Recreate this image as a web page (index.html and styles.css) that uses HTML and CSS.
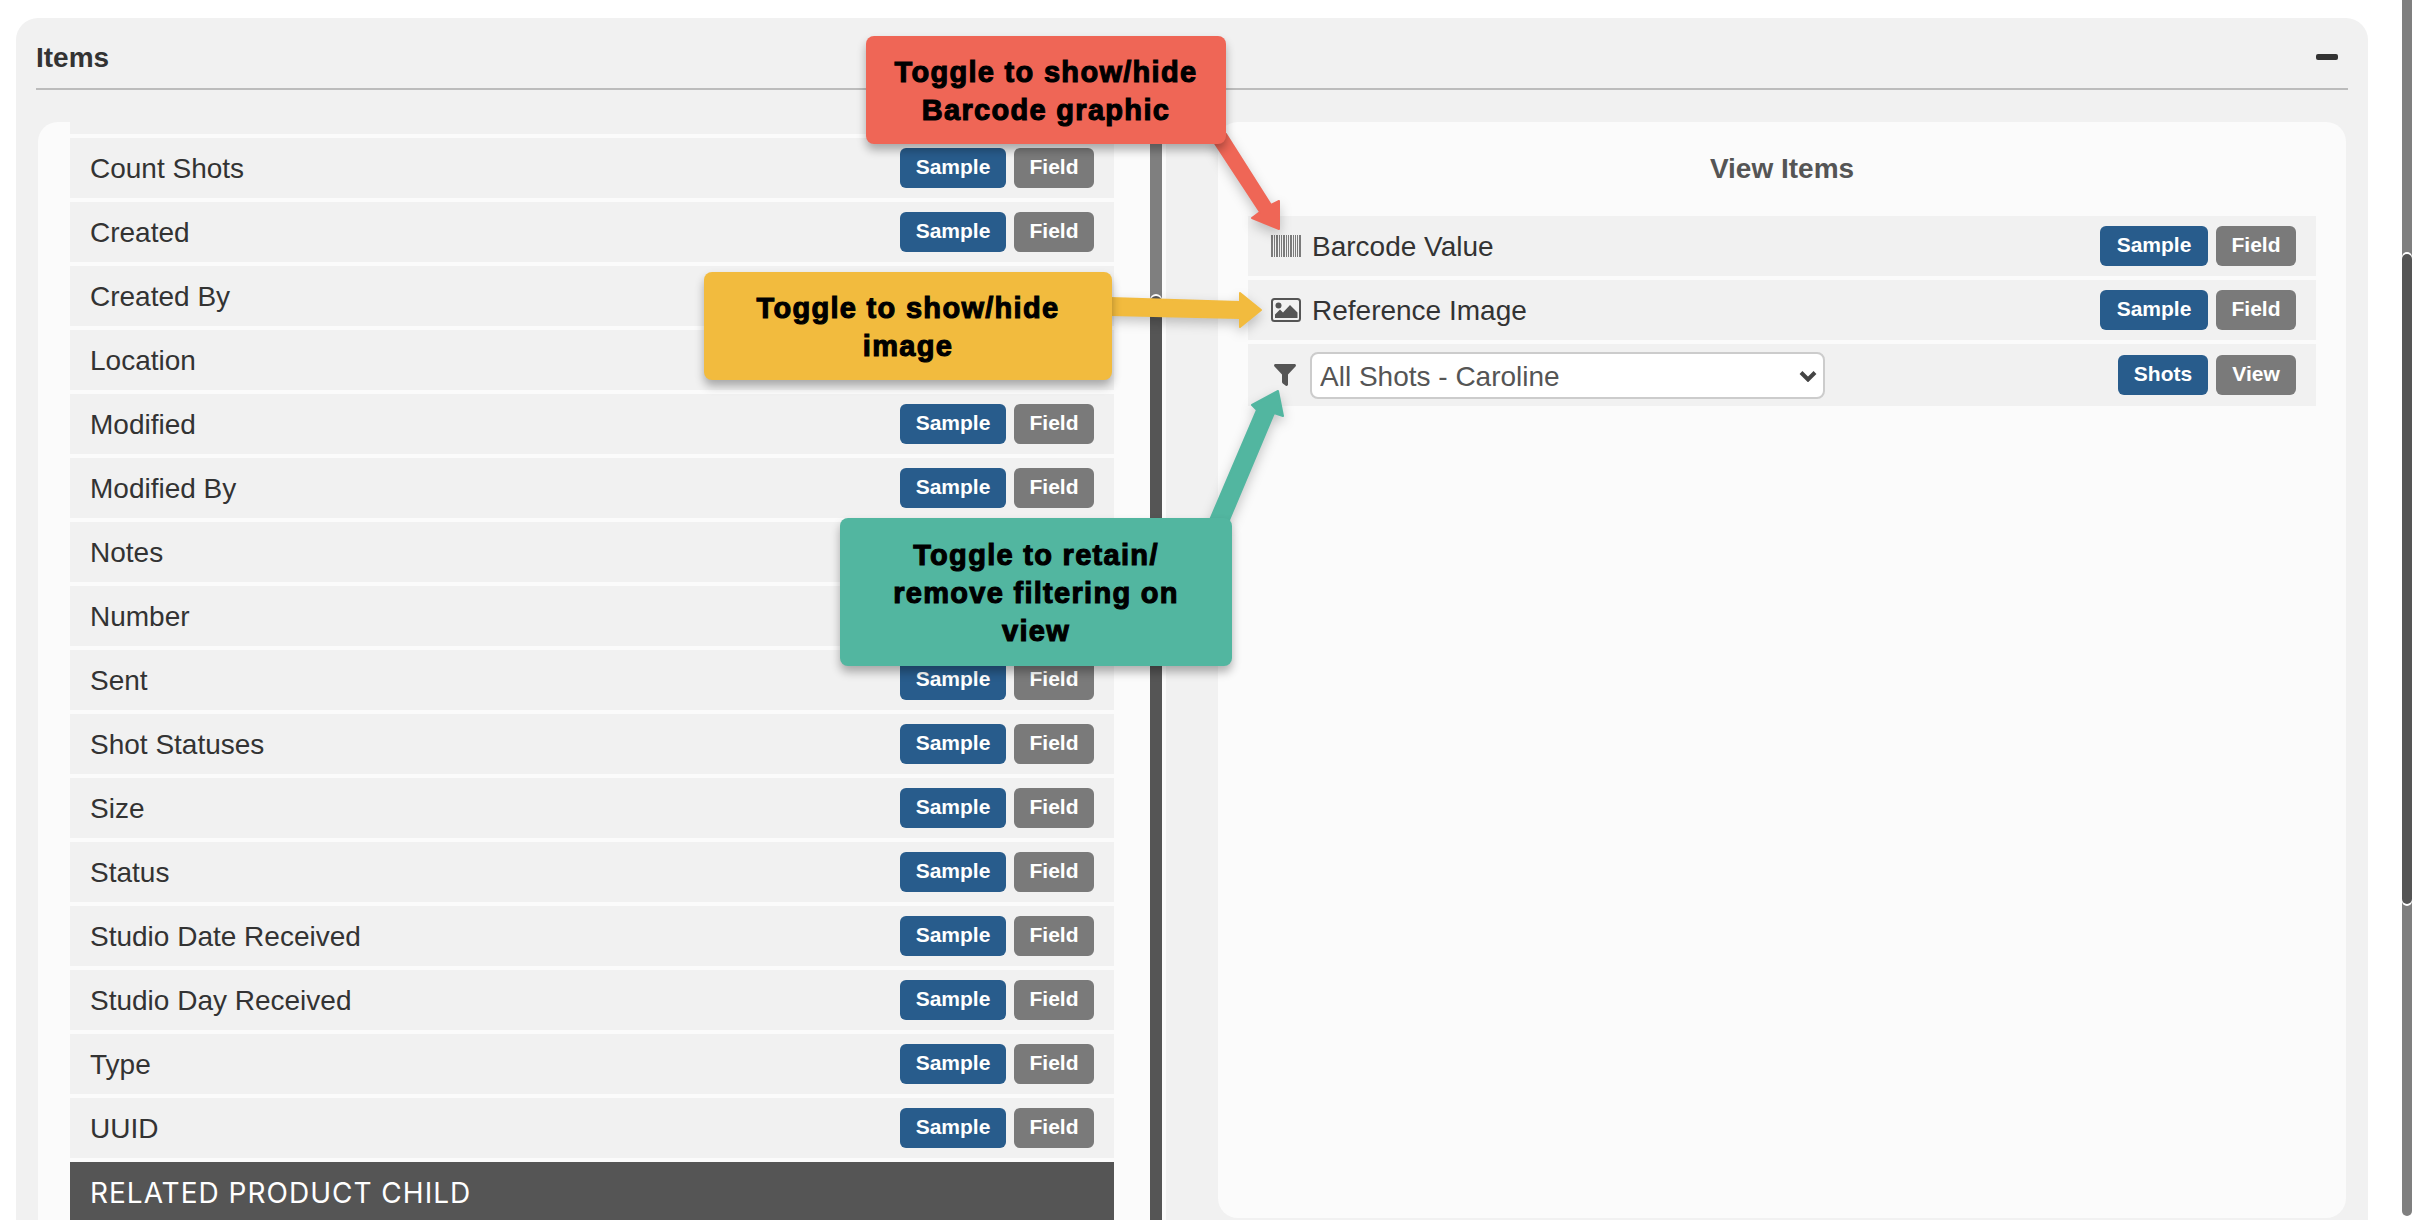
FILE: index.html
```html
<!DOCTYPE html>
<html lang="en">
<head>
<meta charset="utf-8">
<title>Items</title>
<link rel="stylesheet" href="styles.css">
</head>
<body>
<div class="page">
  <section class="panel">
    <header class="panel-head">
      <h2 class="panel-title">Items</h2>
      <span class="collapse"></span>
    </header>
    <div class="columns">
      <div class="col col-left">
        <div class="list">
          <div class="row-clipped"></div>
          <div class="row"><span class="label">Count Shots</span><span class="btn btn-blue">Sample</span><span class="btn btn-grey">Field</span></div>
          <div class="row"><span class="label">Created</span><span class="btn btn-blue">Sample</span><span class="btn btn-grey">Field</span></div>
          <div class="row"><span class="label">Created By</span><span class="btn btn-blue">Sample</span><span class="btn btn-grey">Field</span></div>
          <div class="row"><span class="label">Location</span><span class="btn btn-blue">Sample</span><span class="btn btn-grey">Field</span></div>
          <div class="row"><span class="label">Modified</span><span class="btn btn-blue">Sample</span><span class="btn btn-grey">Field</span></div>
          <div class="row"><span class="label">Modified By</span><span class="btn btn-blue">Sample</span><span class="btn btn-grey">Field</span></div>
          <div class="row"><span class="label">Notes</span><span class="btn btn-blue">Sample</span><span class="btn btn-grey">Field</span></div>
          <div class="row"><span class="label">Number</span><span class="btn btn-blue">Sample</span><span class="btn btn-grey">Field</span></div>
          <div class="row"><span class="label">Sent</span><span class="btn btn-blue">Sample</span><span class="btn btn-grey">Field</span></div>
          <div class="row"><span class="label">Shot Statuses</span><span class="btn btn-blue">Sample</span><span class="btn btn-grey">Field</span></div>
          <div class="row"><span class="label">Size</span><span class="btn btn-blue">Sample</span><span class="btn btn-grey">Field</span></div>
          <div class="row"><span class="label">Status</span><span class="btn btn-blue">Sample</span><span class="btn btn-grey">Field</span></div>
          <div class="row"><span class="label">Studio Date Received</span><span class="btn btn-blue">Sample</span><span class="btn btn-grey">Field</span></div>
          <div class="row"><span class="label">Studio Day Received</span><span class="btn btn-blue">Sample</span><span class="btn btn-grey">Field</span></div>
          <div class="row"><span class="label">Type</span><span class="btn btn-blue">Sample</span><span class="btn btn-grey">Field</span></div>
          <div class="row"><span class="label">UUID</span><span class="btn btn-blue">Sample</span><span class="btn btn-grey">Field</span></div>
          <div class="group">RELATED PRODUCT CHILD</div>
        </div>
        <div class="track track-inner"><div class="thumb thumb-inner"></div></div>
      </div>
      <div class="col col-right">
        <h3 class="col-title">View Items</h3>
        <div class="view-rows">
          <div class="row row-view">
            <svg class="icon icon-bars" viewBox="0 0 30 22" width="30" height="22" aria-hidden="true">
              <g class="bars">
                <rect x="0" width="2" height="22"/><rect x="3" width="1" height="22"/><rect x="5" width="2" height="22"/><rect x="8" width="1" height="22"/><rect x="10" width="1" height="22"/><rect x="12" width="2" height="22"/><rect x="15" width="1" height="22"/><rect x="17" width="1" height="22"/><rect x="19" width="2" height="22"/><rect x="22" width="1" height="22"/><rect x="24" width="1" height="22"/><rect x="26" width="1" height="22"/><rect x="28" width="2" height="22"/>
              </g>
            </svg>
            <span class="label">Barcode Value</span><span class="btn btn-blue btn-wide">Sample</span><span class="btn btn-grey">Field</span>
          </div>
          <div class="row row-view">
            <svg class="icon icon-bars" viewBox="0 0 30 24" width="30" height="24" aria-hidden="true">
              <rect class="pic-frame" x="1" y="1" width="28" height="22" rx="2.5"/>
              <circle class="pic-fill" cx="7.5" cy="7.5" r="3"/>
              <path class="pic-fill" d="M4 20v-3.500l5-5 3 3 7-7.500 7.500 7.500v5.500z"/>
            </svg>
            <span class="label">Reference Image</span><span class="btn btn-blue btn-wide">Sample</span><span class="btn btn-grey">Field</span>
          </div>
          <div class="row row-view row-filter">
            <span class="icon-box">
              <svg viewBox="0 0 22 22" width="22" height="22" aria-hidden="true">
                <path class="pic-fill" d="M1.500 0h19c1.300 0 1.900 1.500 1 2.400L14 10.500V20.500c0 1.200-1.300 1.800-2.200 1.200l-3-2.300c-.5-.3-.8-.8-.8-1.300V10.500L.5 2.400C-.4 1.500.2 0 1.500 0z"/>
              </svg>
            </span>
            <span class="select-wrap">
              <select class="select"><option>All Shots - Caroline</option></select>
              <svg class="chevron" viewBox="0 0 18 12" width="18" height="12" aria-hidden="true"><path d="M2 2.500l7 7 7-7" /></svg>
            </span>
            <span class="spacer"></span>
            <span class="btn btn-blue btn-shots">Shots</span><span class="btn btn-grey">View</span>
          </div>
        </div>
      </div>
    </div>
  </section>
  <div class="track track-page"><div class="thumb thumb-page"></div></div>
</div>

<svg class="arrows" viewBox="0 0 2412 1220" width="2412" height="1220" aria-hidden="true">
  <polygon class="arrow arrow-red" points="1214,142 1226,134 1271,205 1279,201 1279,229 1252,218 1260,212"/>
  <polygon class="arrow arrow-yellow" points="1110,298 1240,302 1240,293 1261,310 1240,327 1240,318 1110,315"/>
  <polygon class="arrow arrow-green" points="1210,520 1257,410 1252,405 1278,391 1283,416 1274,413 1229,520"/>
</svg>

<div class="callout callout-red">Toggle to show/hide<br>Barcode graphic</div>
<div class="callout callout-yellow">Toggle to show/hide<br>image</div>
<div class="callout callout-green">Toggle to retain/<br>remove filtering on<br>view</div>
</body>
</html>
```
FILE: styles.css
```css
* { box-sizing: border-box; }
html, body { margin: 0; padding: 0; }
body {
  position: relative;
  width: 2412px;
  height: 1220px;
  overflow: hidden;
  background: #fff;
  font-family: "Liberation Sans", Arial, sans-serif;
  color: #333;
}
.page {
  display: flex;
  align-items: flex-start;
  height: 1220px;
  padding-left: 16px;
}
.panel {
  width: 2352px;
  height: 1202px;
  margin-top: 18px;
  padding: 0 20px;
  background: #f1f1f1;
  border-radius: 22px 22px 0 0;
  overflow: hidden;
}
.panel-head {
  display: flex;
  justify-content: space-between;
  align-items: center;
  height: 72px;
  padding-top: 14px;
  padding-bottom: 4px;
  border-bottom: 2px solid #bcbcbc;
}
.panel-title {
  margin: 0;
  font-size: 28px;
  font-weight: 700;
  color: #333;
}
.collapse {
  width: 22px;
  height: 6px;
  margin-right: 10px;
  margin-bottom: 2px;
  border-radius: 2px;
  background: #333;
}
.columns {
  display: flex;
  gap: 52px;
  margin-top: 32px;
  padding: 0 2px;
  height: 1098px;
}
.col {
  width: 1128px;
  background: #fbfbfb;
}
.col-left {
  display: flex;
  padding-left: 32px;
  padding-right: 4px;
  border-radius: 20px 0 0 0;
  overflow: hidden;
}
.list {
  display: flex;
  flex-direction: column;
  gap: 4px;
  width: 1044px;
  margin-right: 36px;
}
.row-clipped {
  flex: none;
  height: 12px;
  background: #f1f1f1;
}
.row {
  flex: none;
  display: flex;
  align-items: center;
  gap: 8px;
  height: 60px;
  padding: 0 20px;
  background: #f1f1f1;
}
.label {
  flex: 1;
  padding-top: 2px;
  font-size: 28px;
  color: #333;
}
.btn {
  display: flex;
  justify-content: center;
  align-items: center;
  width: 80px;
  height: 40px;
  padding-bottom: 2px;
  border-radius: 6px;
  font-size: 21px;
  font-weight: 700;
  color: #fff;
}
.btn-blue { width: 106px; background: #285c8c; }
.btn-wide { width: 108px; }
.btn-shots { width: 90px; }
.btn-grey { background: #7a7a7a; }
.group {
  flex: none;
  height: 60px;
  padding: 14px 20px 0 20px;
  background: #555;
  color: #fff;
  font-family: Inter, sans-serif;
  font-size: 28px;
  letter-spacing: 1px;
  white-space: nowrap;
}
.track {
  flex: none;
  background: #7f7f7f;
}
.track-inner {
  width: 12px;
  padding-top: 174px;
}
.thumb {
  background: #555;
  box-shadow: 0 -2px 0 #fff;
}
.thumb-inner {
  height: 1000px;
  border-radius: 6px 6px 0 0;
}
.track-page {
  width: 10px;
  height: 1216px;
  margin-left: 34px;
  padding-top: 254px;
  border-radius: 0 0 5px 5px;
}
.thumb-page {
  height: 650px;
  border-radius: 5px;
  box-shadow: 0 -2px 0 #fff, 0 2px 0 #fff;
}
.col-right {
  height: 1096px;
  padding: 0 30px;
  border-radius: 20px;
}
.col-title {
  margin: 0;
  height: 94px;
  padding-top: 30px;
  text-align: center;
  font-size: 28px;
  line-height: 34px;
  font-weight: 700;
  color: #555;
}
.view-rows {
  display: flex;
  flex-direction: column;
  gap: 4px;
}
.row-view { padding: 0 20px 0 22px; }
.row-view .label { margin-left: 3px; color: #333; }
.icon-bars { margin-left: 1px; }
.row-filter { height: 62px; }
.bars rect { fill: #7b7b7b; }
.pic-frame { fill: none; stroke: #555; stroke-width: 2; }
.pic-fill { fill: #555; }
.icon-box {
  display: flex;
  justify-content: center;
  width: 30px;
  margin-right: 2px;
}
.select-wrap {
  position: relative;
  display: block;
  width: 515px;
  height: 47px;
}
.select {
  display: block;
  width: 100%;
  height: 100%;
  padding: 2px 30px 0 8px;
  appearance: none;
  background: #fff;
  border: 2px solid #ccc;
  border-radius: 8px;
  font-family: "Liberation Sans", Arial, sans-serif;
  font-size: 28px;
  color: #555;
}
.chevron {
  position: absolute;
  right: 8px;
  top: 18px;
}
.chevron path { fill: none; stroke: #444; stroke-width: 4; }
.spacer { flex: 1; }
.arrows {
  position: absolute;
  left: 0;
  top: 0;
  filter: drop-shadow(0 5px 6px rgba(0, 0, 0, .22));
}
.arrow { stroke-width: 2; stroke-linejoin: round; }
.arrow-red { fill: #ef6656; stroke: #ef6656; }
.arrow-yellow { fill: #f2bb3e; stroke: #f2bb3e; }
.arrow-green { fill: #52b6a0; stroke: #52b6a0; }
.callout {
  position: absolute;
  display: flex;
  justify-content: center;
  align-items: center;
  padding-top: 2px;
  text-align: center;
  border-radius: 8px;
  box-shadow: 0 6px 10px rgba(0, 0, 0, .3);
  font-size: 29px;
  line-height: 38px;
  font-weight: 700;
  letter-spacing: 1.3px;
  color: #000;
  -webkit-text-stroke: 1.1px #000;
}
.callout-red { left: 866px; top: 36px; width: 360px; height: 108px; background: #ef6656; }
.callout-yellow { left: 704px; top: 272px; width: 408px; height: 108px; background: #f2bb3e; }
.callout-green { left: 840px; top: 518px; width: 392px; height: 148px; background: #52b6a0; }
```
